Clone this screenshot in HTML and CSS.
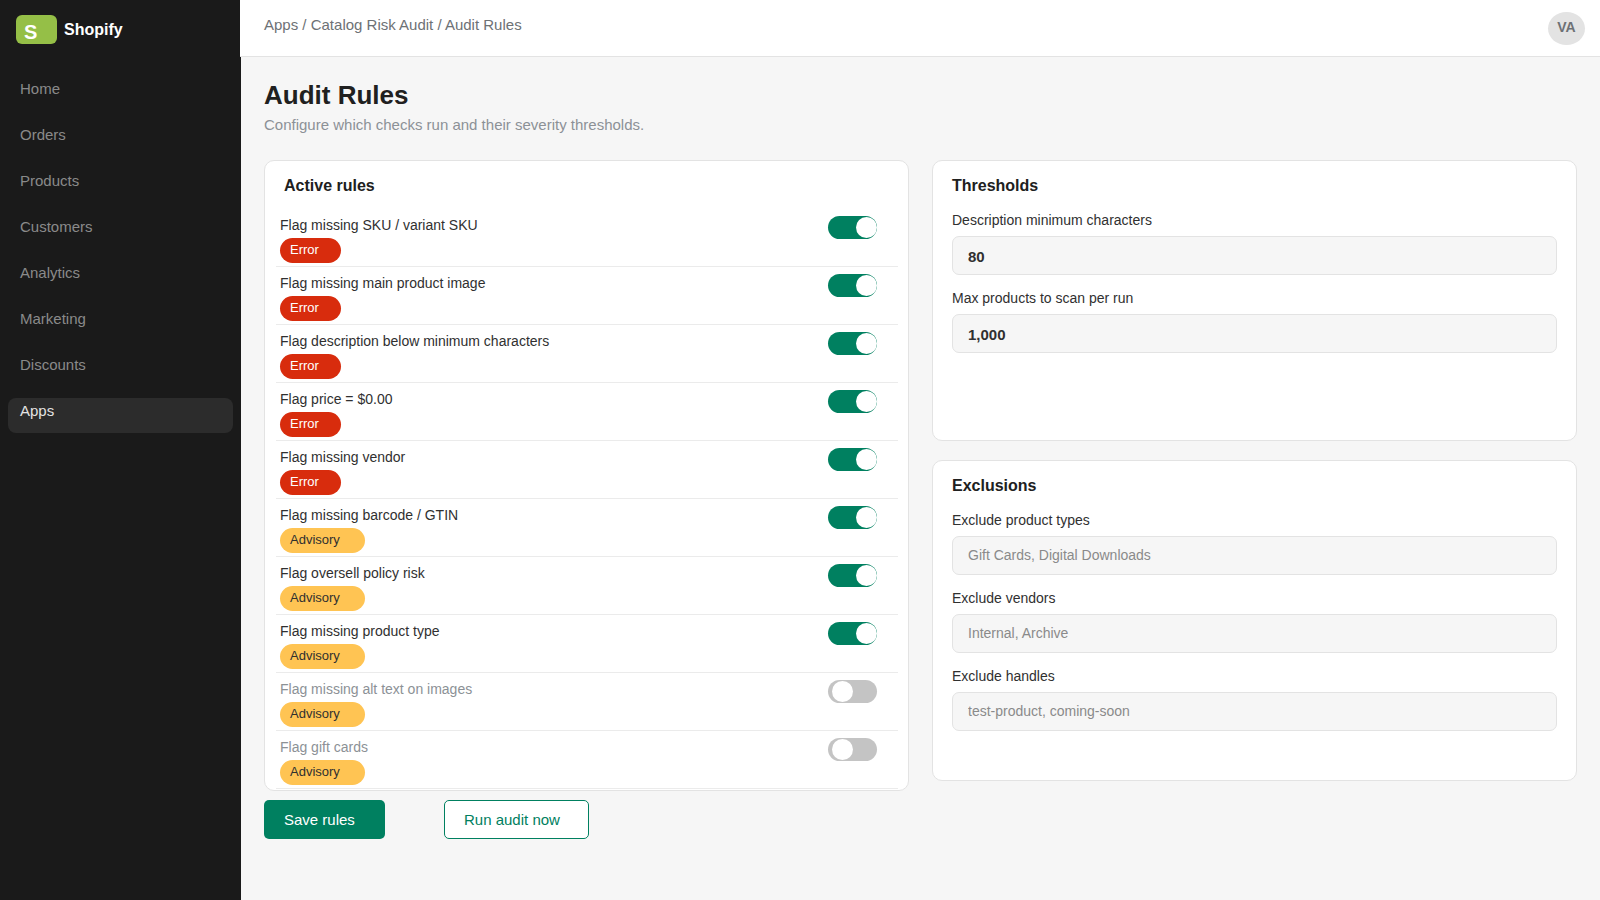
FILE: index.html
```html
<!DOCTYPE html>
<html lang="en">
<head>
    <meta charset="UTF-8">
    <title>Audit Rules</title>
    <link rel="stylesheet" href="styles.css">
</head>
<body>

<div class="whole">
    <div class="side">
        <div class="brand">
            <div class="logo">S</div>
            <strong>Shopify</strong>
        </div>
        <div class="nav">
            <a class="item">Home</a>
            <a class="item">Orders</a>
            <a class="item">Products</a>
            <a class="item">Customers</a>
            <a class="item">Analytics</a>
            <a class="item">Marketing</a>
            <a class="item">Discounts</a>
            <a class="item active">Apps</a>
        </div>
    </div>

    <div class="main">
        <div class="top">
            <div class="crumbs">Apps / Catalog Risk Audit / Audit Rules</div>
            <div class="avatar">VA</div>
        </div>

        <div class="content">
            <h1 class="title">Audit Rules</h1>
            <p class="sub">Configure which checks run and their severity thresholds.</p>

            <div class="cols">
                <div>
                    <div class="card rules">
                        <h2 class="head head-rules">Active rules</h2>

                        <div class="row">
                            <div>
                                <div class="name">Flag missing SKU / variant SKU</div>
                                <span class="pill error">Error</span>
                            </div>
                            <div class="toggle on"><i class="knob"></i></div>
                        </div>
                        <div class="row">
                            <div>
                                <div class="name">Flag missing main product image</div>
                                <span class="pill error">Error</span>
                            </div>
                            <div class="toggle on"><i class="knob"></i></div>
                        </div>
                        <div class="row">
                            <div>
                                <div class="name">Flag description below minimum characters</div>
                                <span class="pill error">Error</span>
                            </div>
                            <div class="toggle on"><i class="knob"></i></div>
                        </div>
                        <div class="row">
                            <div>
                                <div class="name">Flag price = $0.00</div>
                                <span class="pill error">Error</span>
                            </div>
                            <div class="toggle on"><i class="knob"></i></div>
                        </div>
                        <div class="row">
                            <div>
                                <div class="name">Flag missing vendor</div>
                                <span class="pill error">Error</span>
                            </div>
                            <div class="toggle on"><i class="knob"></i></div>
                        </div>
                        <div class="row">
                            <div>
                                <div class="name">Flag missing barcode / GTIN</div>
                                <span class="pill advisory">Advisory</span>
                            </div>
                            <div class="toggle on"><i class="knob"></i></div>
                        </div>
                        <div class="row">
                            <div>
                                <div class="name">Flag oversell policy risk</div>
                                <span class="pill advisory">Advisory</span>
                            </div>
                            <div class="toggle on"><i class="knob"></i></div>
                        </div>
                        <div class="row">
                            <div>
                                <div class="name">Flag missing product type</div>
                                <span class="pill advisory">Advisory</span>
                            </div>
                            <div class="toggle on"><i class="knob"></i></div>
                        </div>
                        <div class="row">
                            <div>
                                <div class="name off-name">Flag missing alt text on images</div>
                                <span class="pill advisory">Advisory</span>
                            </div>
                            <div class="toggle"><i class="knob"></i></div>
                        </div>
                        <div class="row">
                            <div>
                                <div class="name off-name">Flag gift cards</div>
                                <span class="pill advisory">Advisory</span>
                            </div>
                            <div class="toggle"><i class="knob"></i></div>
                        </div>
                    </div>

                    <div class="actions">
                        <button class="btn save" type="button">Save rules</button>
                        <button class="btn run" type="button">Run audit now</button>
                    </div>
                </div>

                <div class="stack">
                    <div class="card thresholds">
                        <h2 class="head">Thresholds</h2>
                        <label class="lab">Description minimum characters</label>
                        <input class="in strong" type="text" value="80">
                        <label class="lab">Max products to scan per run</label>
                        <input class="in strong" type="text" value="1,000">
                    </div>

                    <div class="card exclusions">
                        <h2 class="head">Exclusions</h2>
                        <label class="lab">Exclude product types</label>
                        <input class="in" type="text" placeholder="Gift Cards, Digital Downloads">
                        <label class="lab">Exclude vendors</label>
                        <input class="in" type="text" placeholder="Internal, Archive">
                        <label class="lab">Exclude handles</label>
                        <input class="in" type="text" placeholder="test-product, coming-soon">
                    </div>
                </div>
            </div>
        </div>
    </div>
</div>

</body>
</html>
```

FILE: styles.css
```css
*{
    padding: 0;
    margin: 0;
    box-sizing: border-box;
}
body {
    background-color: #F6F6F6;
    color: #303030;
    font-family: "Liberation Sans", Arial, sans-serif;
    font-size: 14px;
    overflow: hidden;
}

.whole{
    display: flex;
    height: 900px;
}

/* sidebar */
.side{
    width: 241px;
    flex-shrink: 0;
    background-color: #1A1A1A;
}

.brand{
    display: flex;
    align-items: center;
    gap: 7px;
    height: 58px;
    padding-left: 16px;
    color: white;
    font-size: 16px;
}

.brand strong{
    margin-top: 1px;
}

.logo{
    width: 41px;
    height: 29px;
    padding-left: 8px;
    padding-top: 6px;
    background-color: #95BF47;
    border-radius: 6px;
    color: white;
    font-size: 20px;
    font-weight: bold;
    line-height: 23px;
}

.nav{
    display: flex;
    flex-direction: column;
    gap: 11px;
    padding: 18px 8px 0 8px;
}

.item{
    height: 35px;
    padding: 4px 12px;
    border-radius: 8px;
    color: #8A8A8A;
    font-size: 15px;
    line-height: 18px;
}

.active{
    background-color: #2C2C2C;
    color: #E3E3E3;
}

/* top bar */
.main{
    flex: 1;
    min-width: 0;
    margin-left: -1px;
}

.top{
    display: flex;
    justify-content: space-between;
    height: 57px;
    padding: 16px 15px 0 24px;
    background-color: white;
    border-bottom: 1px solid #E3E3E3;
}

.crumbs{
    color: #6D7175;
    font-size: 15px;
    line-height: 18px;
}

.avatar{
    width: 37px;
    height: 33px;
    margin-top: -4px;
    background-color: #E3E3E3;
    border-radius: 50%;
    color: #6D7175;
    font-size: 14px;
    font-weight: bold;
    line-height: 31px;
    text-align: center;
}

/* page */
.content{
    padding: 22px 24px 0 24px;
}

.title{
    color: #202020;
    font-size: 26px;
    line-height: 32px;
}

.sub{
    margin-top: 4px;
    color: #8C9196;
    font-size: 15px;
    line-height: 20px;
}

.cols{
    display: grid;
    grid-template-columns: 645px 645px;
    gap: 23px;
    margin-top: 25px;
}

.stack{
    display: flex;
    flex-direction: column;
    gap: 19px;
}

.card{
    background-color: white;
    border: 1px solid #E3E3E3;
    border-radius: 10px;
    padding: 15px 19px 0 19px;
}

.rules{
    height: 631px;
    padding: 15px 10px 0 11px;
}

.thresholds{
    height: 281px;
}

.exclusions{
    height: 321px;
}

.head{
    color: #202020;
    font-size: 16px;
    line-height: 20px;
    margin-bottom: 14px;
}

.head-rules{
    margin-left: 8px;
    margin-bottom: 13px;
}

/* rule rows */
.row{
    display: flex;
    justify-content: space-between;
    height: 58px;
    padding: 6px 21px 0 4px;
    border-bottom: 1px solid #EBEBEB;
}

.name{
    height: 20px;
    margin-bottom: 3px;
    font-size: 14px;
    line-height: 20px;
}

.off-name{
    color: #8C9196;
}

.pill{
    display: inline-block;
    height: 25px;
    padding-left: 10px;
    border-radius: 13px;
    font-size: 13px;
    line-height: 24px;
    vertical-align: top;
}

.error{
    width: 61px;
    background-color: #D82C0D;
    color: white;
}

.advisory{
    width: 85px;
    background-color: #FFC453;
    color: #303030;
}

.toggle{
    position: relative;
    width: 49px;
    height: 23px;
    margin-top: 1px;
    background-color: #C4C4C4;
    border-radius: 12px;
}

.on{
    background-color: #008060;
}

.knob{
    position: absolute;
    top: 1px;
    left: 4px;
    width: 21px;
    height: 21px;
    background-color: white;
    border-radius: 50%;
}

.on .knob{
    left: 28px;
}

/* buttons */
.actions{
    display: flex;
    gap: 59px;
    margin-top: 9px;
}

.btn{
    height: 39px;
    border-radius: 5px;
    font-family: inherit;
    font-size: 15px;
    text-align: left;
}

.save{
    width: 121px;
    padding-left: 20px;
    background-color: #008060;
    color: white;
    border: 0;
}

.run{
    width: 145px;
    padding-left: 19px;
    background-color: white;
    color: #008060;
    border: 1px solid #008060;
}

/* fields */
.lab{
    display: block;
    height: 20px;
    margin-bottom: 6px;
    font-size: 14px;
    line-height: 20px;
}

.in{
    display: block;
    width: 100%;
    height: 39px;
    margin-bottom: 13px;
    padding-left: 15px;
    padding-bottom: 2px;
    background-color: #F6F6F6;
    border: 1px solid #E3E3E3;
    border-radius: 7px;
    color: #303030;
    font-family: inherit;
    font-size: 14px;
}

.in::placeholder{
    color: #8A8A8A;
    opacity: 1;
}

.strong{
    padding-top: 1px;
    padding-bottom: 0;
    font-size: 15px;
    font-weight: bold;
}
```
